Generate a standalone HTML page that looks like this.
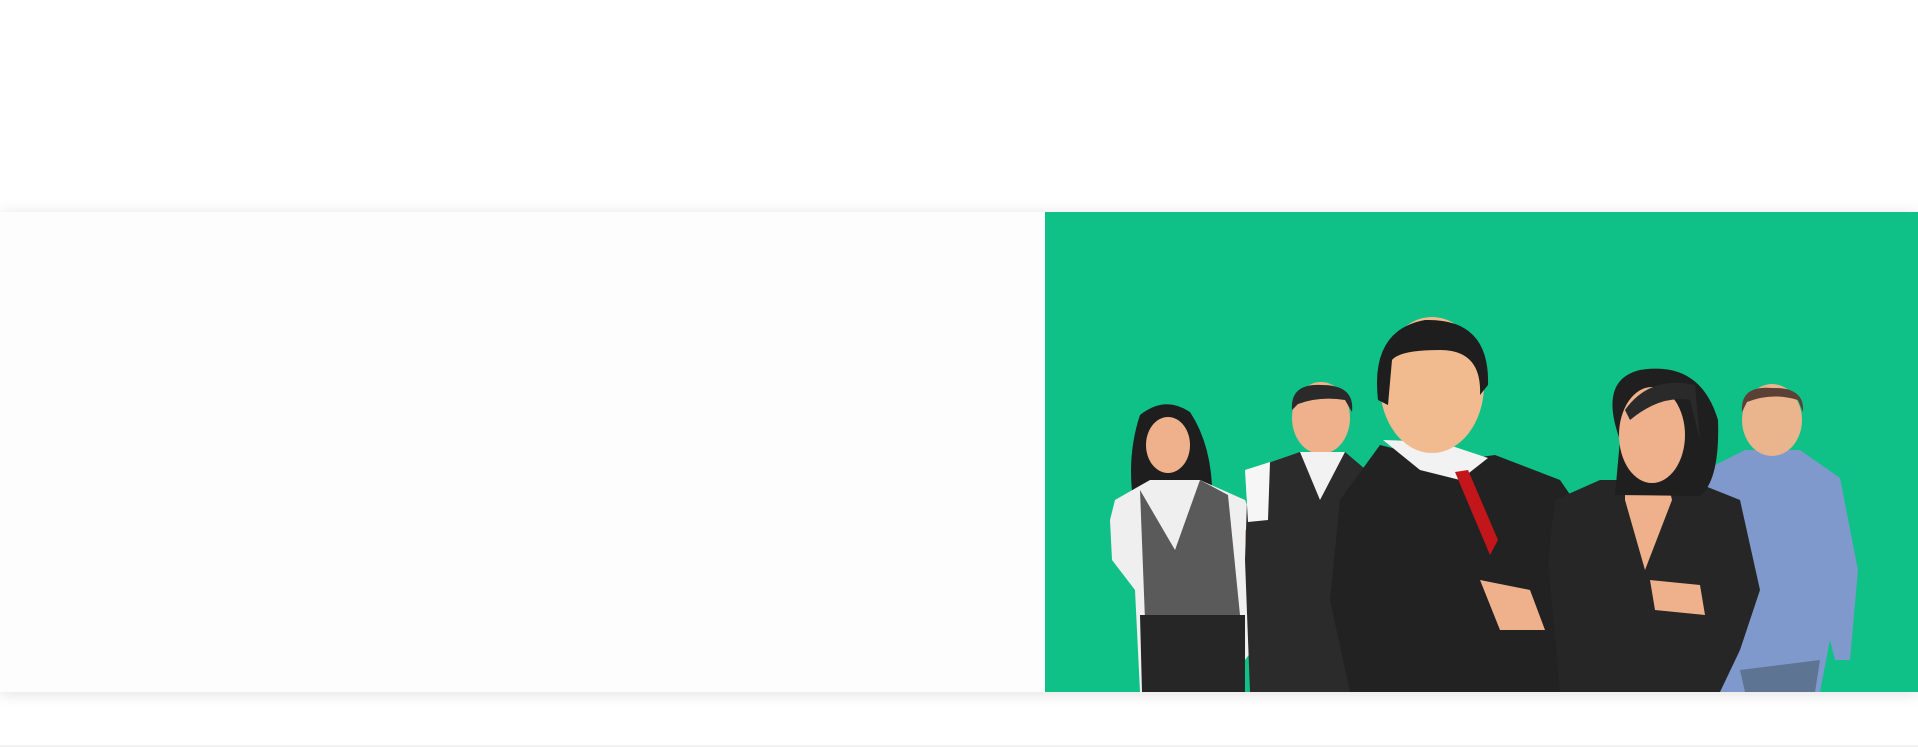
<!DOCTYPE html>
<html><head><meta charset="utf-8"><style>
html,body{margin:0;padding:0;width:1918px;height:747px;overflow:hidden;background:#fff;font-family:"Liberation Sans",sans-serif}
.band{position:absolute;left:0;top:212px;width:1918px;height:480px;background:#fdfdfd;box-shadow:0 2px 14px rgba(0,0,0,.12)}
.line{position:absolute;left:0;top:745px;width:1918px;height:2px;background:#f2f2f2}
svg{position:absolute;left:0;top:0}
</style></head><body>
<div class="band"></div>
<div class="line"></div>
<svg width="1918" height="747" viewBox="0 0 1918 747">
<rect x="1045" y="212" width="873" height="480" fill="#0fc087"/>
<!-- blue shirt man -->
<path d="M1705 470 L1745 450 L1800 450 L1840 478 L1858 570 L1850 660 L1835 660 L1830 640 L1820 692 L1710 692 Z" fill="#7f99cc"/>
<path d="M1740 670 L1820 660 L1815 692 L1745 692Z" fill="#5d7593"/>
<ellipse cx="1772" cy="420" rx="30" ry="36" fill="#eab48d"/>
<path d="M1742 412 Q1740 385 1772 388 Q1805 387 1803 412 L1798 400 Q1772 392 1747 402Z" fill="#5b4036"/>
<!-- glasses woman -->
<path d="M1140 415 Q1165 395 1190 412 Q1215 450 1212 510 L1135 512 Q1125 460 1140 415Z" fill="#1e1e1e"/>
<ellipse cx="1168" cy="445" rx="22" ry="28" fill="#eeb18c"/>
<path d="M1115 500 L1150 480 L1200 480 L1245 500 L1258 530 L1260 640 L1245 660 L1240 692 L1140 692 L1135 590 L1112 560 L1110 520Z" fill="#efefef"/>
<path d="M1140 490 L1175 550 L1200 480 L1228 495 L1240 615 L1195 630 L1145 620Z" fill="#5a5a5a"/>
<path d="M1140 615 L1245 615 L1245 692 L1142 692Z" fill="#262626"/>
<path d="M1245 530 L1265 540 L1265 640 L1250 665Z" fill="#eeb18c"/>
<!-- vest man -->
<ellipse cx="1321" cy="418" rx="29" ry="36" fill="#eeb18c"/>
<path d="M1292 410 Q1290 383 1322 385 Q1355 385 1352 412 L1345 400 Q1320 396 1298 404Z" fill="#2a2a2a"/>
<path d="M1248 470 L1300 452 L1345 452 L1372 475 L1380 692 L1250 692 L1245 560Z" fill="#2b2b2b"/>
<path d="M1300 452 L1320 500 L1345 452Z" fill="#f2f2f2"/>
<path d="M1245 470 L1270 462 L1268 520 L1248 522Z" fill="#f6f6f6"/>
<!-- main man -->
<path d="M1340 500 L1380 445 L1420 455 L1460 460 L1495 455 L1560 480 L1605 545 L1620 630 L1560 692 L1350 692 L1330 600Z" fill="#222"/>
<path d="M1383 440 L1420 470 L1460 480 L1488 458 L1440 442Z" fill="#f2f2f2"/>
<path d="M1455 472 L1468 470 L1498 540 L1490 555 Z" fill="#c3161b"/>
<path d="M1480 580 L1530 590 L1545 630 L1500 630 Z" fill="#eeb18c"/>
<ellipse cx="1432" cy="385" rx="52" ry="68" fill="#f1bb8f"/>
<path d="M1378 400 Q1370 330 1425 320 Q1490 318 1488 385 L1480 395 Q1482 350 1440 350 Q1400 350 1392 360 L1388 405Z" fill="#1e1e1e"/>
<!-- right woman -->
<path d="M1555 500 L1600 480 L1690 480 L1740 500 L1760 590 L1740 650 L1720 692 L1560 692 L1548 560Z" fill="#262626"/>
<path d="M1625 470 L1665 470 L1672 500 L1645 570 L1625 500Z" fill="#eeb18c"/>
<path d="M1620 440 Q1598 380 1640 370 Q1700 360 1718 420 Q1720 480 1700 496 L1615 495Z" fill="#1f1f1f"/>
<ellipse cx="1652" cy="435" rx="33" ry="48" fill="#eeb18c"/>
<path d="M1625 410 Q1650 375 1695 385 L1700 440 L1690 400 Q1660 395 1630 420Z" fill="#2a2a2a"/>
<path d="M1650 580 L1700 585 L1705 615 L1655 610Z" fill="#eeb18c"/>
</svg>
</body></html>
